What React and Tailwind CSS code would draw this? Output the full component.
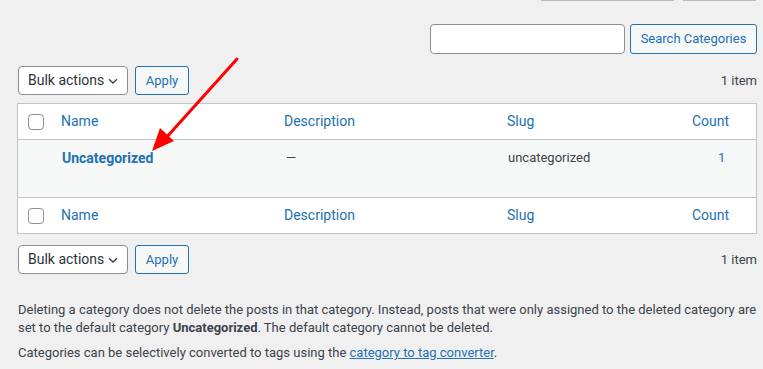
import React from 'react';

const cols = 'grid grid-cols-[35px_223px_223px_185px_1fr]';

function Checkbox() {
  return <span className="block h-4 w-4 rounded-[4px] border border-[#8c8f94] bg-white" />;
}

function HeadRow({ top }) {
  return (
    <div className={`${cols} h-[36px] items-center bg-white ${top ? 'border-b border-[#c3c4c7]' : 'border-t border-[#c3c4c7]'}`}>
      <div className="flex justify-center pl-[1px]">
        <Checkbox />
      </div>
      <div className="pl-2 text-[#2271b1]">Name</div>
      <div className="pl-2 text-[#2271b1]">Description</div>
      <div className="pl-2 text-[#2271b1]">Slug</div>
      <div className="pl-2 text-[#2271b1]">Count</div>
    </div>
  );
}

function Toolbar() {
  return (
    <div className="flex items-center justify-between">
      <div className="flex items-center gap-[7px] pl-px">
        <div className="flex h-[29px] w-[110px] items-center justify-between rounded-[4px] border border-[#8c8f94] bg-white pl-[9px] pr-[7px] text-[14px] text-[#2c3338]">
          <span>Bulk actions</span>
          <svg width="14" height="14" viewBox="0 0 14 14" fill="none" stroke="#3c434a" strokeWidth="1.3">
            <path d="M3 5.2 7 9l4-3.8" />
          </svg>
        </div>
        <div className="flex h-[29px] w-[54px] items-center justify-center rounded-[3px] border border-[#2271b1] bg-[#f6f7f7] text-[13px] text-[#2271b1]">
          Apply
        </div>
      </div>
      <span className="text-[13px] text-[#3c434a]">1 item</span>
    </div>
  );
}

export default function App() {
  return (
    <div className="relative h-[369px] w-[763px] overflow-hidden bg-[#f0f0f1] font-['Roboto',sans-serif] text-[14px] text-[#3c434a]">
      <div className="flex h-px">
        <span className="ml-[541px] w-[133px] bg-[#b9babd]" />
        <span className="ml-[9px] w-[73px] bg-[#b9babd]" />
      </div>

      <div className="mt-[23px] flex justify-end gap-[5px] pr-[6px]">
        <div className="h-[30px] w-[195px] rounded-[4px] border border-[#8c8f94] bg-white" />
        <div className="flex h-[30px] w-[127px] items-center justify-center rounded-[3px] border border-[#2271b1] bg-[#f6f7f7] text-[13px] text-[#2271b1]">
          Search Categories
        </div>
      </div>

      <div className="w-[757px] pl-[17px]">
        <div className="mt-[12px]">
          <Toolbar />
        </div>

        <div className="mt-[8px] border border-[#c3c4c7]">
          <HeadRow top />
          <div className={`${cols} h-[57px] bg-[#f6f7f7] pt-[8px]`}>
            <div />
            <div className="pl-[9px] font-bold text-[#2271b1]">Uncategorized</div>
            <div className="pl-[10px] text-[13px]">—</div>
            <div className="pl-[9px] text-[13px]">uncategorized</div>
            <div className="pl-[34px] text-[13px] text-[#2271b1]">1</div>
          </div>
          <HeadRow />
        </div>

        <div className="mt-[11px]">
          <Toolbar />
        </div>
      </div>

      <div className="mt-[27px] pl-[18px] pr-[6px] text-[13px] leading-[18px] text-[#3c434a]">
        <p>
          Deleting a category does not delete the posts in that category. Instead, posts that were only assigned to the deleted category are set to the default category <strong>Uncategorized</strong>. The default category cannot be deleted.
        </p>
        <p className="mt-[7px]">
          Categories can be selectively converted to tags using the{' '}
          <span className="text-[#2271b1] underline">category to tag converter</span>.
        </p>
      </div>

      <svg className="absolute left-0 top-0" width="763" height="369" viewBox="0 0 763 369">
        <line x1="237" y1="59" x2="165" y2="139" stroke="#ff0000" strokeWidth="3" strokeLinecap="round" />
        <polygon points="152,151 160,128 174,141" fill="#ff0000" />
      </svg>
    </div>
  );
}
